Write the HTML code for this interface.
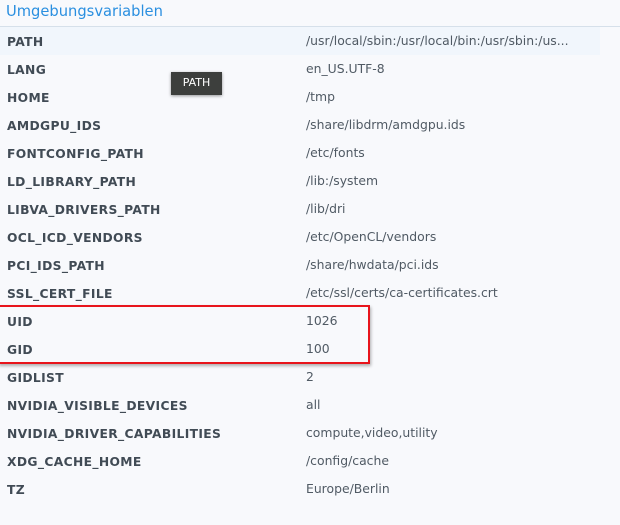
<html><head><style>
body{margin:0;width:620px;height:525px;background:#f8f9fc;font-family:"DejaVu Sans",sans-serif;position:relative;overflow:hidden}
.h{position:absolute;left:6px;top:3px;font-size:14.7px;color:#2a8fe0}
.line{position:absolute;left:0;top:26px;width:620px;height:1px;background:#d6e0ea}
.r{position:absolute;left:0;width:620px;height:28px;line-height:28px;font-size:12px}
.r b{position:absolute;left:7px;top:1px;color:#414b55;font-size:12.3px;letter-spacing:0.35px}
.r span{position:absolute;left:306px;color:#505a64;font-size:12.4px}
.hl{background:#f1f6fc;width:600px}
.tip{position:absolute;left:171px;top:72px;width:51px;height:23px;background:#3d3f3d;color:#fff;font-size:11px;line-height:21px;text-align:center;box-shadow:0 1px 3px rgba(0,0,0,.4)}
.box{position:absolute;left:-2px;top:305px;width:368px;height:55px;border:2px solid #e8141c;box-shadow:1px 2px 3px rgba(0,0,0,.3)}
</style></head><body>
<div class="h">Umgebungsvariablen</div><div class="line"></div>
<div class="r hl" style="top:27px"><b>PATH</b><span>/usr/local/sbin:/usr/local/bin:/usr/sbin:/us...</span></div>
<div class="r" style="top:55px"><b>LANG</b><span>en_US.UTF-8</span></div>
<div class="r" style="top:83px"><b>HOME</b><span>/tmp</span></div>
<div class="r" style="top:111px"><b>AMDGPU_IDS</b><span>/share/libdrm/amdgpu.ids</span></div>
<div class="r" style="top:139px"><b>FONTCONFIG_PATH</b><span>/etc/fonts</span></div>
<div class="r" style="top:167px"><b>LD_LIBRARY_PATH</b><span>/lib:/system</span></div>
<div class="r" style="top:195px"><b>LIBVA_DRIVERS_PATH</b><span>/lib/dri</span></div>
<div class="r" style="top:223px"><b>OCL_ICD_VENDORS</b><span>/etc/OpenCL/vendors</span></div>
<div class="r" style="top:251px"><b>PCI_IDS_PATH</b><span>/share/hwdata/pci.ids</span></div>
<div class="r" style="top:279px"><b>SSL_CERT_FILE</b><span>/etc/ssl/certs/ca-certificates.crt</span></div>
<div class="r" style="top:307px"><b>UID</b><span>1026</span></div>
<div class="r" style="top:335px"><b>GID</b><span>100</span></div>
<div class="r" style="top:363px"><b>GIDLIST</b><span>2</span></div>
<div class="r" style="top:391px"><b>NVIDIA_VISIBLE_DEVICES</b><span>all</span></div>
<div class="r" style="top:419px"><b>NVIDIA_DRIVER_CAPABILITIES</b><span>compute,video,utility</span></div>
<div class="r" style="top:447px"><b>XDG_CACHE_HOME</b><span>/config/cache</span></div>
<div class="r" style="top:475px"><b>TZ</b><span>Europe/Berlin</span></div>
<div class="tip">PATH</div>
<div class="box"></div>
</body></html>
